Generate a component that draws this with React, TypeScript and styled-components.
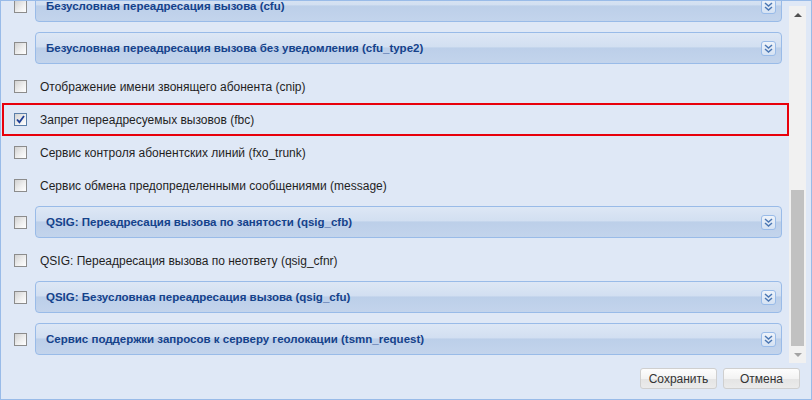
import {useLayoutEffect, useRef} from 'react';
import styled, {createGlobalStyle} from 'styled-components';

const GlobalStyle = createGlobalStyle`
  html, body {
    margin: 0;
    padding: 0;
    background: #dfe8f6;
  }
  body {
    font-family: 'Liberation Sans', Arial, sans-serif;
  }
`;

type Item =
  | {kind: 'plain'; label: string; checked?: boolean; marked?: boolean}
  | {kind: 'group'; label: string};

const items: Item[] = [
  {kind: 'plain', label: 'Трёхсторонняя конференция (3pty)'},
  {kind: 'plain', label: 'Обратный вызов (callback)'},
  {kind: 'plain', label: 'Ограничение исходящей связи (cbar)'},
  {kind: 'group', label: 'Переадресация вызова по занятости (cfb)'},
  {kind: 'group', label: 'Переадресация вызова по неответу (cfnr)'},
  {kind: 'plain', label: 'Переадресация вызова при недоступности (cfos)'},
  {kind: 'plain', label: 'Удержание вызова (chold)'},
  {kind: 'plain', label: 'Определение номера (clip)'},
  {kind: 'plain', label: 'Запрет определения номера (clir)'},
  {kind: 'plain', label: 'Конференция (conference)'},
  {kind: 'plain', label: 'Передача вызова (ctr)'},
  {kind: 'group', label: 'Безусловная переадресация вызова (cfu)'},
  {kind: 'group', label: 'Безусловная переадресация вызова без уведомления (cfu_type2)'},
  {kind: 'plain', label: 'Отображение имени звонящего абонента (cnip)'},
  {kind: 'plain', label: 'Запрет переадресуемых вызовов (fbc)', checked: true, marked: true},
  {kind: 'plain', label: 'Сервис контроля абонентских линий (fxo_trunk)'},
  {kind: 'plain', label: 'Сервис обмена предопределенными сообщениями (message)'},
  {kind: 'group', label: 'QSIG: Переадресация вызова по занятости (qsig_cfb)'},
  {kind: 'plain', label: 'QSIG: Переадресация вызова по неответу (qsig_cfnr)'},
  {kind: 'group', label: 'QSIG: Безусловная переадресация вызова (qsig_cfu)'},
  {kind: 'group', label: 'Сервис поддержки запросов к серверу геолокации (tsmn_request)'},
];

const Window = styled.div`
  width: 812px;
  height: 400px;
  box-sizing: border-box;
  border: 1px solid #99bbe8;
  background: #dfe8f6;
  display: flex;
  flex-direction: column;
`;

const Scroller = styled.div`
  display: flex;
  height: 362px;
  width: 805px;
`;

const Body = styled.div`
  flex: 1;
  overflow-y: auto;
  overflow-x: hidden;
  scrollbar-width: none;
  &::-webkit-scrollbar {
    display: none;
  }
`;

const List = styled.div`
  padding: 0 0 2px 1px;
`;

const Row = styled.div<{$marked?: boolean}>`
  display: flex;
  align-items: center;
  height: 33px;
  box-sizing: border-box;
  padding-left: ${p => (p.$marked ? 10 : 12)}px;
  border: ${p => (p.$marked ? '2px solid #e8000b' : 'none')};
`;

const GroupRow = styled.div`
  display: flex;
  align-items: center;
  padding: 4px 7px 6px 12px;
`;

const Box = styled.span<{$checked?: boolean}>`
  flex: none;
  width: 13px;
  height: 13px;
  box-sizing: border-box;
  border: 1px solid ${p => (p.$checked ? '#5b7ea8' : '#8c8c8c')};
  background: linear-gradient(135deg, #d2d2d2 0%, #eeeeee 55%, #ffffff 100%);
  display: flex;
  align-items: center;
  justify-content: center;
`;

const Label = styled.span`
  margin-left: 13px;
  font-size: 12px;
  color: #1f1f1f;
  white-space: nowrap;
`;

const Fieldset = styled.div`
  flex: 1;
  margin-left: 8px;
  height: 32px;
  box-sizing: border-box;
  border: 1px solid #99bbe8;
  border-radius: 4px;
  background: linear-gradient(
    to bottom,
    #dde7f5 0%,
    #d2dff1 46%,
    #bccfe9 50%,
    #c3d4ec 100%
  );
  display: flex;
  align-items: center;
  justify-content: space-between;
  padding: 0 5px 0 10px;
`;

const Legend = styled.span`
  font-size: 11.5px;
  font-weight: bold;
  color: #15428b;
  white-space: nowrap;
`;

const Toggle = styled.span`
  width: 15px;
  height: 15px;
  box-sizing: border-box;
  border: 1px solid #99bbe8;
  border-radius: 3px;
  background: linear-gradient(#eef3fa, #d5e2f3);
  display: flex;
  align-items: center;
  justify-content: center;
`;

const ScrollBar = styled.div`
  flex: none;
  width: 17px;
  margin-top: 5px;
  background: #f1f1f1;
  display: flex;
  flex-direction: column;
`;

const ScrollButton = styled.div`
  flex: none;
  height: 17px;
  display: flex;
  align-items: center;
  justify-content: center;
`;

const Arrow = styled.span<{$down?: boolean}>`
  width: 0;
  height: 0;
  border-left: 4px solid transparent;
  border-right: 4px solid transparent;
  ${p =>
    p.$down
      ? 'border-top: 4px solid #a3a3a3;'
      : 'border-bottom: 4px solid #505050;'}
`;

const Track = styled.div`
  flex: 1;
  display: flex;
  flex-direction: column;
  justify-content: flex-end;
  padding: 0 2px;
`;

const Thumb = styled.div`
  height: 156px;
  background: #c1c1c1;
`;

const Footer = styled.div`
  flex: 1;
  display: flex;
  justify-content: flex-end;
  align-items: flex-start;
  gap: 6px;
  padding: 5px 11px 0 0;
`;

const Button = styled.button`
  width: 77px;
  height: 21px;
  box-sizing: border-box;
  border: 1px solid #cfcfcf;
  border-radius: 3px;
  background: linear-gradient(to bottom, #fdfdfd 0%, #f3f3f3 50%, #e4e4e4 51%, #ebebeb 100%);
  font-family: 'Liberation Sans', Arial, sans-serif;
  font-size: 12px;
  color: #333;
  padding: 0;
  cursor: pointer;
`;

function CheckBox({checked}: {checked?: boolean}) {
  return (
    <Box $checked={checked}>
      {checked && (
        <svg width="9" height="9" viewBox="0 0 9 9">
          <path d="M1 4.5 L3.4 7.2 L8 1" fill="none" stroke="#1d3d95" strokeWidth="1.8" />
        </svg>
      )}
    </Box>
  );
}

function ExpandIcon() {
  return (
    <svg width="9" height="9" viewBox="0 0 9 9">
      <path d="M1 1 L4.5 4 L8 1 M1 5 L4.5 8 L8 5" fill="none" stroke="#4b77b3" strokeWidth="1.5" />
    </svg>
  );
}

export default function App() {
  const body = useRef<HTMLDivElement>(null);

  useLayoutEffect(() => {
    if (body.current) body.current.scrollTop = body.current.scrollHeight;
  }, []);

  return (
    <>
      <GlobalStyle />
      <Window>
        <Scroller>
          <Body ref={body}>
            <List>
              {items.map(item =>
                item.kind === 'group' ? (
                  <GroupRow key={item.label}>
                    <CheckBox />
                    <Fieldset>
                      <Legend>{item.label}</Legend>
                      <Toggle>
                        <ExpandIcon />
                      </Toggle>
                    </Fieldset>
                  </GroupRow>
                ) : (
                  <Row key={item.label} $marked={item.marked}>
                    <CheckBox checked={item.checked} />
                    <Label>{item.label}</Label>
                  </Row>
                )
              )}
            </List>
          </Body>
          <ScrollBar>
            <ScrollButton>
              <Arrow />
            </ScrollButton>
            <Track>
              <Thumb />
            </Track>
            <ScrollButton>
              <Arrow $down />
            </ScrollButton>
          </ScrollBar>
        </Scroller>
        <Footer>
          <Button>Сохранить</Button>
          <Button>Отмена</Button>
        </Footer>
      </Window>
    </>
  );
}
